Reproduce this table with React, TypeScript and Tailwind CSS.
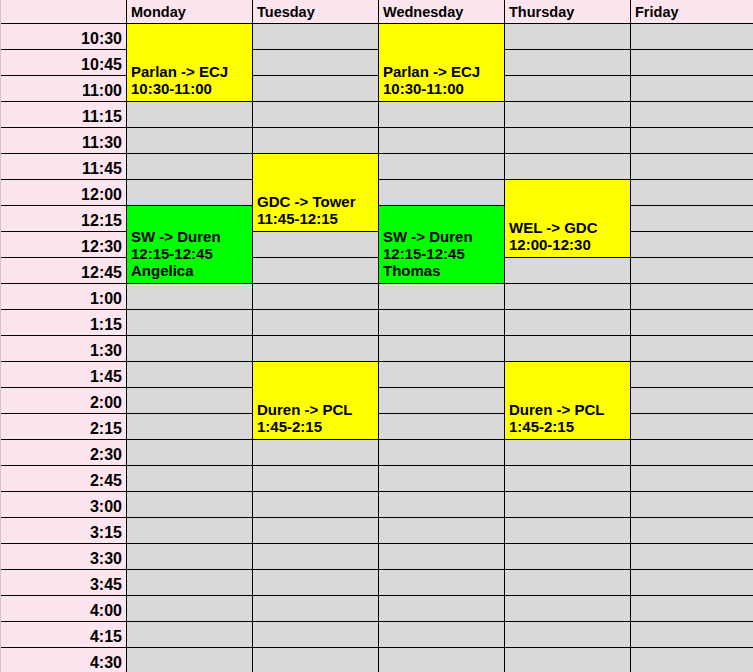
import React from 'react';

const days = ['Monday', 'Tuesday', 'Wednesday', 'Thursday', 'Friday'];

const times = [
  '10:30', '10:45', '11:00', '11:15', '11:30', '11:45', '12:00', '12:15', '12:30', '12:45',
  '1:00', '1:15', '1:30', '1:45', '2:00', '2:15', '2:30', '2:45', '3:00', '3:15',
  '3:30', '3:45', '4:00', '4:15', '4:30',
];

type Slot = { day: number; start: number; span: number; color: 'yellow' | 'green'; lines: string[] };

const slots: Slot[] = [
  { day: 0, start: 0, span: 3, color: 'yellow', lines: ['Parlan -> ECJ', '10:30-11:00'] },
  { day: 2, start: 0, span: 3, color: 'yellow', lines: ['Parlan -> ECJ', '10:30-11:00'] },
  { day: 1, start: 5, span: 3, color: 'yellow', lines: ['GDC -> Tower', '11:45-12:15'] },
  { day: 3, start: 6, span: 3, color: 'yellow', lines: ['WEL -> GDC', '12:00-12:30'] },
  { day: 0, start: 7, span: 3, color: 'green', lines: ['SW -> Duren', '12:15-12:45', 'Angelica'] },
  { day: 2, start: 7, span: 3, color: 'green', lines: ['SW -> Duren', '12:15-12:45', 'Thomas'] },
  { day: 1, start: 13, span: 3, color: 'yellow', lines: ['Duren -> PCL', '1:45-2:15'] },
  { day: 3, start: 13, span: 3, color: 'yellow', lines: ['Duren -> PCL', '1:45-2:15'] },
];

function findSlot(day: number, row: number) {
  return slots.find(s => s.day === day && s.start === row);
}

function covered(day: number, row: number) {
  return slots.some(s => s.day === day && row > s.start && row < s.start + s.span);
}

export default function App() {
  const cells: React.ReactNode[] = [];

  times.forEach((t, r) => {
    cells.push(
      <div key={`t${r}`} className="flex items-end justify-end bg-[#fce5ee] pr-[4px] pb-[1px] text-[16px] leading-[19px] font-bold">
        {t}
      </div>
    );
    days.forEach((_, d) => {
      if (covered(d, r)) return;
      const slot = findSlot(d, r);
      if (slot) {
        cells.push(
          <div
            key={`c${r}-${d}`}
            className={`row-span-3 flex flex-col justify-end px-[4px] pb-[4px] text-[15px] leading-[17px] font-bold ${slot.color === 'green' ? 'bg-[#00ff00]' : 'bg-[#ffff00]'}`}
          >
            {slot.lines.map(l => (
              <div key={l}>{l}</div>
            ))}
          </div>
        );
      } else {
        cells.push(<div key={`c${r}-${d}`} className="bg-[#d9d9d9]" />);
      }
    });
  });

  return (
    <div className="w-[753px] h-[672px] overflow-hidden bg-white font-['Liberation_Sans',Arial,sans-serif] text-black">
      <div className="grid grid-cols-[125px_125px_125px_125px_125px_1fr] grid-rows-[23px] auto-rows-[25px] gap-px bg-black border-l border-[#c8c8c8]">
        <div className="bg-[#fce5ee]" />
        {days.map(d => (
          <div key={d} className="flex items-end bg-[#fce5ee] pl-[4px] pb-[3px] text-[14.5px] leading-[16px] font-bold">
            {d}
          </div>
        ))}
        {cells}
      </div>
    </div>
  );
}
